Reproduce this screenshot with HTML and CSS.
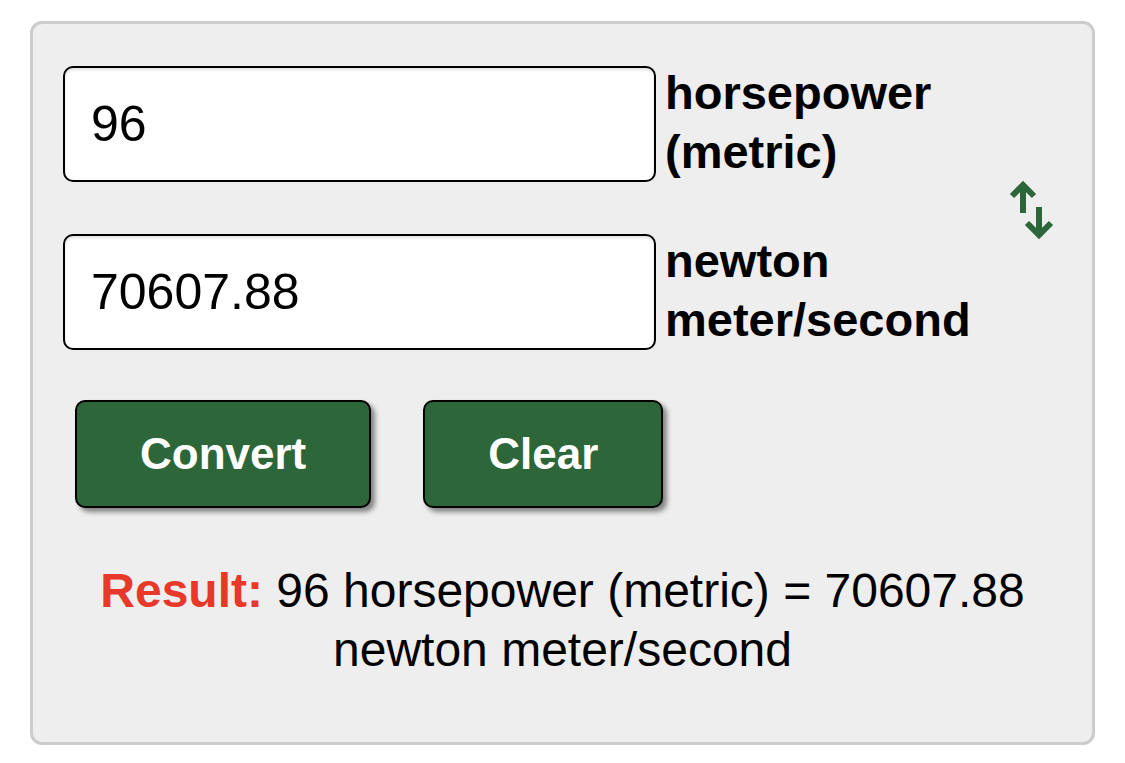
FILE: index.html
```html
<!DOCTYPE html>
<html lang="en">
<head>
    <meta charset="UTF-8">
    <meta name="viewport" content="width=device-width, initial-scale=1.0">
    <title>Horsepower (metric) to Newton meter/second</title>
    <link rel="stylesheet" href="styles.css">
</head>
<body>
    <div class="converter">
        <form id="convForm" class="fields">
            <input type="text" id="fromValue" class="value" value="96">
            <label for="fromValue" class="unit">horsepower (metric)</label>

            <button type="button" id="swap" class="swap" title="Swap units">
                <svg width="46" height="60" viewBox="0 0 46 60" fill="none" stroke="#2c6639" stroke-width="6">
                    <path d="M14 5 V33" />
                    <path d="M3 16 L14 5 L25 16" />
                    <path d="M30 27 V55" />
                    <path d="M18 43 L30 55 L42 43" />
                </svg>
            </button>

            <input type="text" id="toValue" class="value" value="70607.88">
            <label for="toValue" class="unit">newton meter/second</label>
        </form>

        <div class="actions">
            <button type="button" id="convert" class="btn btn-convert">Convert</button>
            <button type="button" id="clear" class="btn btn-clear">Clear</button>
        </div>

        <p id="result" class="result"><b>Result:</b> 96 horsepower (metric) = 70607.88 newton meter/second</p>
    </div>

    <script>
        // 1 hp (metric) = 735.49875 W
        const FACTOR = 735.49875;
        const fromValue = document.getElementById("fromValue");
        const toValue = document.getElementById("toValue");
        const result = document.getElementById("result");
        const fromLabel = document.querySelector('label[for="fromValue"]');
        const toLabel = document.querySelector('label[for="toValue"]');
        let swapped = false;

        function convert() {
            const n = parseFloat(fromValue.value);
            if (isNaN(n)) {
                result.innerHTML = "";
                return;
            }
            const out = swapped ? n / FACTOR : n * FACTOR;
            toValue.value = Math.round(out * 100) / 100;
            result.innerHTML = `<b>Result:</b> ${n} ${fromLabel.textContent} = ${toValue.value} ${toLabel.textContent}`;
        }

        document.getElementById("convert").addEventListener("click", convert);

        document.getElementById("clear").addEventListener("click", function () {
            fromValue.value = "";
            toValue.value = "";
            result.innerHTML = "";
        });

        document.getElementById("swap").addEventListener("click", function () {
            swapped = !swapped;
            const tmp = fromLabel.textContent;
            fromLabel.textContent = toLabel.textContent;
            toLabel.textContent = tmp;
            convert();
        });
    </script>
</body>
</html>
```

FILE: styles.css
```css
* {
    box-sizing: border-box;
}

body {
    margin: 0;
    background: #fff;
    font-family: "Liberation Sans", Arial, Helvetica, sans-serif;
    color: #000;
}

.converter {
    width: 1065px;
    margin: 21px 0 0 30px;
    padding: 42px 30px 63px;
    background: #eeeeee;
    border: 3px solid #cccccc;
    border-radius: 12px;
}

.fields {
    display: grid;
    grid-template-columns: 593px 1fr 60px;
    grid-template-rows: 116px 116px;
    column-gap: 9px;
    row-gap: 52px;
}

.value {
    width: 100%;
    height: 116px;
    padding: 0 26px;
    font-family: inherit;
    font-size: 50px;
    color: #000;
    background: #fff;
    border: 2px solid #000;
    border-radius: 10px;
    box-shadow: inset 0 2px 3px rgba(0, 0, 0, 0.12);
    outline: none;
}

.unit {
    font-size: 47px;
    font-weight: bold;
    line-height: 59px;
    margin-top: -3px;
}

.swap {
    grid-column: 3;
    grid-row: 1 / span 2;
    align-self: center;
    justify-self: center;
    margin-top: 4px;
    padding: 0;
    border: none;
    background: none;
    cursor: pointer;
    line-height: 0;
}

.actions {
    display: flex;
    gap: 52px;
    margin: 50px 0 0 12px;
}

.btn {
    height: 108px;
    padding: 0 63px;
    font-family: inherit;
    font-size: 44px;
    font-weight: bold;
    color: #fff;
    background: #2c6639;
    border: 2px solid #000;
    border-radius: 10px;
    box-shadow: 4px 4px 5px rgba(0, 0, 0, 0.45);
    cursor: pointer;
}

.result {
    margin: 53px 0 0;
    text-align: center;
    font-size: 48px;
    line-height: 59px;
}

.result b {
    color: #e8382a;
}
```
